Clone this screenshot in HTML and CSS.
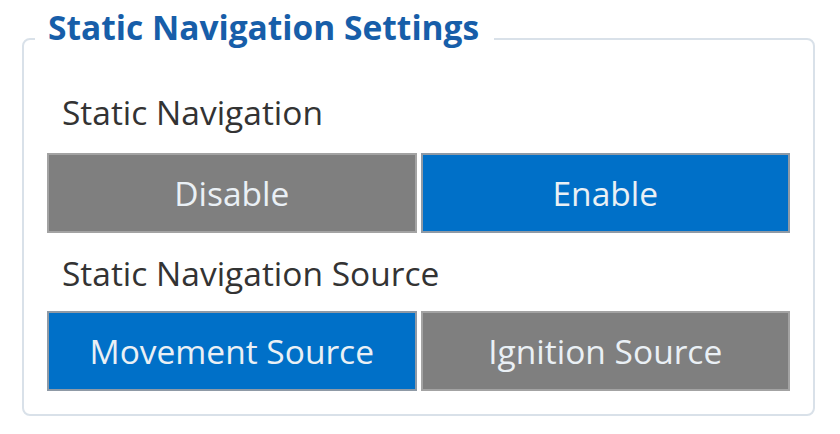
FILE: index.html
```html
<!DOCTYPE html>
<html>
<head>
<meta charset="utf-8">
<link rel="stylesheet" href="styles.css">
</head>
<body>
<fieldset class="panel">
  <legend class="panel-title">Static Navigation Settings</legend>
  <div class="field-label first">Static Navigation</div>
  <div class="toggle">
    <div class="btn off">Disable</div>
    <div class="btn on">Enable</div>
  </div>
  <div class="field-label second">Static Navigation Source</div>
  <div class="toggle last">
    <div class="btn on">Movement Source</div>
    <div class="btn off">Ignition Source</div>
  </div>
</fieldset>
</body>
</html>
```

FILE: styles.css
```css
html, body {
  margin: 0;
  padding: 0;
  background: #ffffff;
}
body {
  font-family: "Open Sans", "Noto Sans", sans-serif;
  width: 840px;
  height: 434px;
  overflow: hidden;
}
.panel {
  margin: 5px 0 0 22px;
  width: 793px;
  box-sizing: border-box;
  border: 2px solid #d9e1e9;
  border-radius: 8px;
  padding: 0 23px 23px 23px;
  min-width: 0;
}
.panel-title {
  margin-left: -12px;
  padding: 0 15px 22px 13px;
  font-size: 33.5px;
  line-height: 45px;
  font-weight: 700;
  color: #175ea9;
}
.field-label {
  font-size: 33.5px;
  line-height: 45px;
  color: #333333;
  padding-left: 15px;
}
.field-label.first {
  margin-top: 18px;
}
.field-label.second {
  margin-top: 18px;
}
.toggle {
  display: grid;
  grid-template-columns: 1fr 1fr;
  gap: 4px;
  margin-top: 18px;
}
.toggle.last {
  margin-top: 15px;
}
.btn {
  height: 80px;
  box-sizing: border-box;
  display: flex;
  align-items: center;
  justify-content: center;
  font-size: 33.5px;
  color: #eaf0f5;
  border: 2px solid #a3a3a3;
}
.btn.off {
  background: #7f7f7f;
}
.btn.on {
  background: #0070c8;
  border-color: #8f9aa6;
}
```
